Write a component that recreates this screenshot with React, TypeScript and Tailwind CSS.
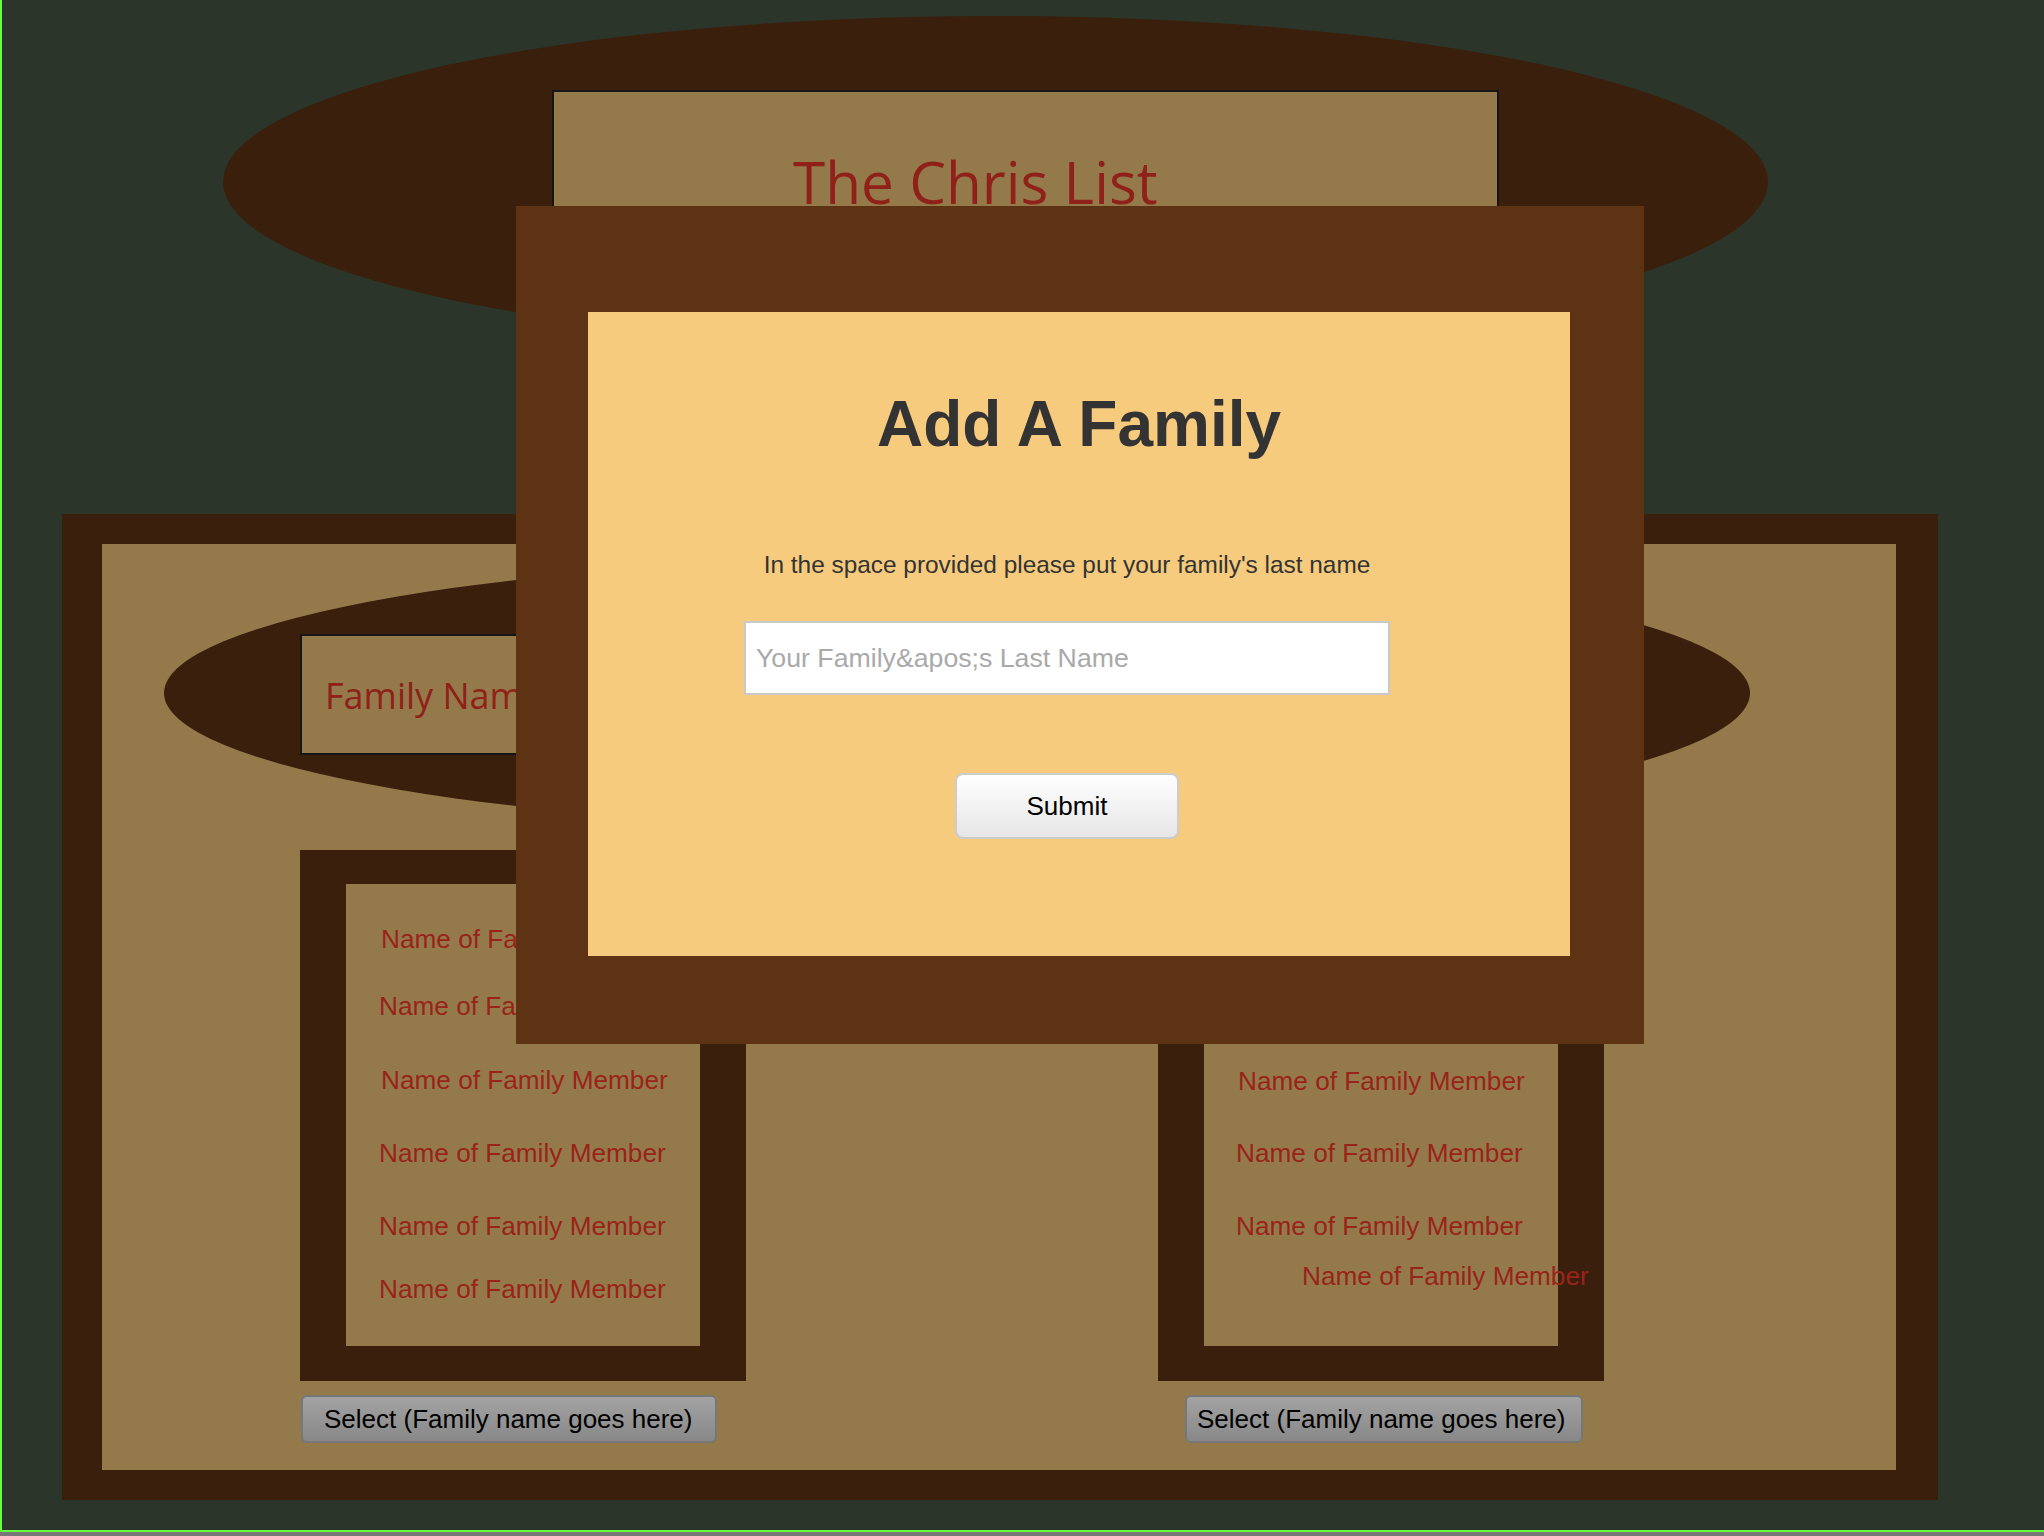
const leftRows = [
  { mt: "mt-[42px]", pl: "pl-[35px]" },
  { mt: "mt-[41px]", pl: "pl-[33px]" },
  { mt: "mt-[48px]", pl: "pl-[35px]" },
  { mt: "mt-[46px]", pl: "pl-[33px]" },
  { mt: "mt-[47px]", pl: "pl-[33px]" },
  { mt: "mt-[37px]", pl: "pl-[33px]" },
];

const rightRows = [
  { mt: "mt-[42px]", pl: "pl-[34px]" },
  { mt: "mt-[41px]", pl: "pl-[34px]" },
  { mt: "mt-[49px]", pl: "pl-[34px]" },
  { mt: "mt-[45px]", pl: "pl-[32px]" },
  { mt: "mt-[47px]", pl: "pl-[32px]" },
  { mt: "mt-[24px]", pl: "pl-[98px]" },
];

function FamilyColumn({
  rows,
  buttonClass,
}: {
  rows: { mt: string; pl: string }[];
  buttonClass: string;
}) {
  return (
    <div className="flex flex-col">
      <div className="h-[531px] w-[446px] border-solid border-[#3a1f0c] border-t-[34px] border-b-[35px] border-x-[46px] bg-[#947a4b]">
        {rows.map((row, i) => (
          <p
            key={i}
            className={`${row.mt} ${row.pl} whitespace-nowrap text-[26.2px] leading-none text-[#9a2319]`}
          >
            Name of Family Member
          </p>
        ))}
      </div>
      <button
        className={`mt-[14px] flex h-[48px] items-center rounded-[6px] border-2 border-[#777] bg-linear-to-b from-[#a3a3a3] to-[#888] text-[26px] leading-none text-black ${buttonClass}`}
      >
        Select (Family name goes here)
      </button>
    </div>
  );
}

function AddFamilyModal() {
  return (
    <div className="absolute left-[516px] top-[206px] h-[838px] w-[1128px] bg-[#5d3314] pl-[72px] pt-[106px]">
      <div className="flex h-[644px] w-[982px] flex-col items-center bg-[#f6cb7d] pt-[80px]">
        <h2 className="text-[64px] font-bold leading-none text-[#333]">Add A Family</h2>
        <form className="flex w-full flex-col items-center pr-[24px]" onSubmit={(e) => e.preventDefault()}>
          <p className="mt-[97px] text-[24.4px] leading-none text-[#333]">
            In the space provided please put your family's last name
          </p>
          <input
            type="text"
            placeholder={"Your Family&apos;s Last Name"}
            className="mt-[44px] h-[74px] w-[646px] border-2 border-[#c9c9c9] bg-white px-[10px] text-[26.7px] text-[#333] outline-none placeholder:text-[#a9a9a9]"
          />
          <button
            type="submit"
            className="mt-[78px] h-[66px] w-[224px] rounded-[8px] border-2 border-[#cccccc] bg-linear-to-b from-white to-[#e6e6e6] text-[26px] leading-none text-black"
          >
            Submit
          </button>
        </form>
      </div>
    </div>
  );
}

export default function App() {
  return (
    <div className="relative flex h-[1536px] w-full flex-col overflow-hidden bg-[#2c3529] font-['Liberation_Sans',Arial,sans-serif]">
      <div className="h-[1532px] border-b-2 border-l-2 border-[#66ff44] pt-[16px]">
        <header className="ml-[221px] h-[332px] w-[1545px] rounded-[50%] bg-[#3a1f0c] pl-[329px] pt-[74px]">
          <div className="h-[200px] w-[947px] border-2 border-[#151515] bg-[#947a4b] pl-[239px] pt-[60px]">
            <h1 className="font-['Open_Sans',sans-serif] text-[58.5px] leading-none text-[#8f2118]">
              The Chris List
            </h1>
          </div>
        </header>

        <main className="ml-[60px] mt-[166px] h-[986px] w-[1876px] border-solid border-[#3a1f0c] border-y-[30px] border-l-[40px] border-r-[42px] bg-[#947a4b] pt-[13px]">
          <div className="ml-[62px] h-[272px] w-[1586px] rounded-[50%] bg-[#3a1f0c] pl-[136px] pt-[77px]">
            <div className="h-[121px] w-[640px] border-2 border-[#151515] bg-[#947a4b] pl-[23px] pt-[42px]">
              <h2 className="font-['Open_Sans',sans-serif] text-[36px] leading-none text-[#8f2118]">
                Family Name
              </h2>
            </div>
          </div>

          <div className="mt-[21px] flex gap-[412px] pl-[198px]">
            <FamilyColumn rows={leftRows} buttonClass="ml-[1px] w-[416px] pl-[21px]" />
            <FamilyColumn rows={rightRows} buttonClass="ml-[27px] w-[398px] pl-[10px]" />
          </div>
        </main>
      </div>
      <div className="h-[4px] bg-[#777]" />

      <AddFamilyModal />
    </div>
  );
}
